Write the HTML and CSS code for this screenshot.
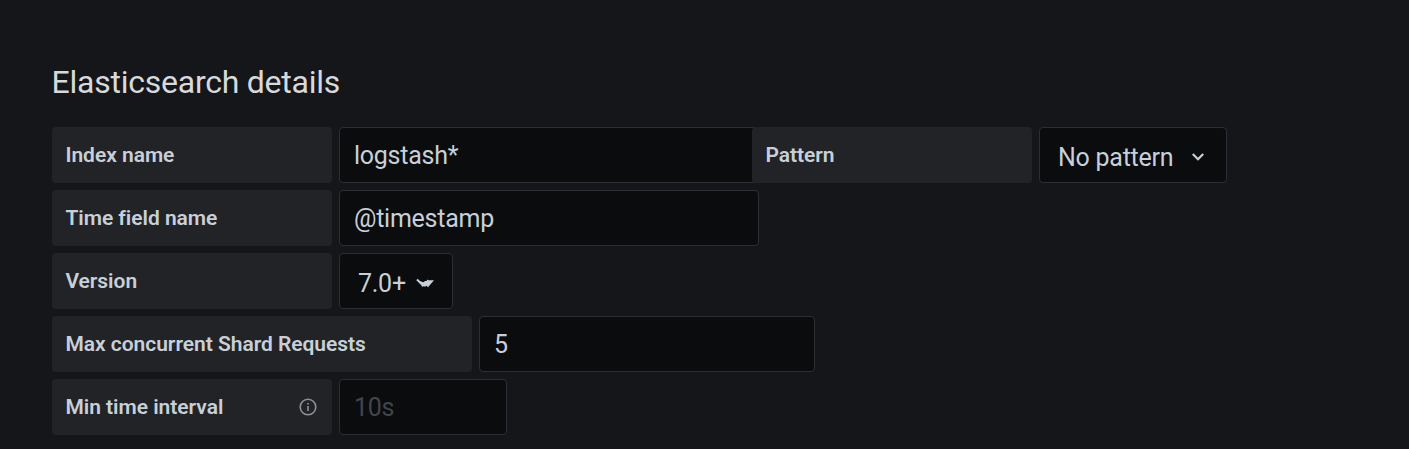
FILE: index.html
```
<!DOCTYPE html>
<html lang="en">
<head>
<meta charset="utf-8">
<title>Elasticsearch details</title>
<link rel="stylesheet" href="styles.css">
</head>
<body>
<main class="page">
  <h3 class="heading">Elasticsearch details</h3>
  <div class="rows">
    <div class="row">
      <div class="label">Index name</div>
      <div class="input input-joined">logstash*</div>
      <div class="label label-joined">Pattern</div>
      <div class="select select-pattern"><span>No pattern</span>
        <svg class="chevron" viewBox="0 0 14 10"><path d="M1.8 2L7 7.2 12.2 2"/></svg>
      </div>
    </div>
    <div class="row">
      <div class="label">Time field name</div>
      <div class="input">@timestamp</div>
    </div>
    <div class="row">
      <div class="label">Version</div>
      <div class="select select-version"><span>7.0+</span>
        <svg class="caret" viewBox="0 0 20 12"><path class="caret-line" d="M2 2.5l5 5"/><path class="caret-fill" d="M4.5 4l4 1.2 1.5-1.2h1.5l1-1.5 1 .8h5.5l-6 7-1.5-1.5-1.5 1-1-.5-2 .5z"/></svg>
      </div>
    </div>
    <div class="row">
      <div class="label label-wide">Max concurrent Shard Requests</div>
      <div class="input input-shards">5</div>
    </div>
    <div class="row">
      <div class="label">Min time interval
        <svg class="info" viewBox="0 0 18 18"><circle cx="9" cy="9" r="7.8"/><path d="M9 8v5M9 5v1.4"/></svg>
      </div>
      <div class="input input-short placeholder">10s</div>
    </div>
  </div>
</main>
</body>
</html>
```
FILE: styles.css
```
* { box-sizing: border-box; }
body {
  margin: 0;
  height: 449px;
  overflow: hidden;
  background: #15161a;
  color: #c7d0d9;
  font-family: Roboto, sans-serif;
}
.page { padding: 62px 52px 0; }
.heading {
  margin: 0 0 25px -0.5px;
  height: 40px;
  line-height: 40px;
  font-size: 32px;
  letter-spacing: -0.24px;
  font-weight: 400;
  color: #d8d9da;
}
.rows { display: flex; flex-direction: column; gap: 7px; }
.row { display: flex; height: 56px; }
.label {
  display: flex;
  align-items: center;
  justify-content: space-between;
  flex: none;
  width: 280px;
  margin-right: 7px;
  padding: 0 15.5px 0 13.4px;
  border-radius: 4px;
  background: #222326;
  font-size: 21px;
  letter-spacing: -0.03px;
  font-weight: 600;
}
.label-joined { position: relative; }
.label-wide { width: 420px; }
.input, .select {
  display: flex;
  align-items: center;
  flex: none;
  border: 1px solid #2c2e33;
  border-radius: 4px;
  background: #0b0c0e;
  font-size: 25px;
  letter-spacing: -0.26px;
}
.input { width: 420px; padding: 0 14px; }
.input-joined { margin-right: -7px; }
.input-shards { width: 336px; }
.input-short { width: 168px; }
.placeholder { color: #41454e; }
.select { padding: 4px 18px 0; }
.select-pattern { width: 188px; }
.select-version { width: 114px; }
.chevron { width: 14px; height: 10px; margin-left: auto; margin-right: 3px; fill: none; stroke: #c7d0d9; stroke-width: 2.2; }
.caret { width: 20px; height: 12px; margin-left: auto; margin-right: -1px; }
.caret-line { fill: none; stroke: #c7d0d9; stroke-width: 2; }
.caret-fill { fill: #c7d0d9; }
.info { width: 18px; height: 18px; fill: none; stroke: #8e9197; stroke-width: 1.6; }
```
